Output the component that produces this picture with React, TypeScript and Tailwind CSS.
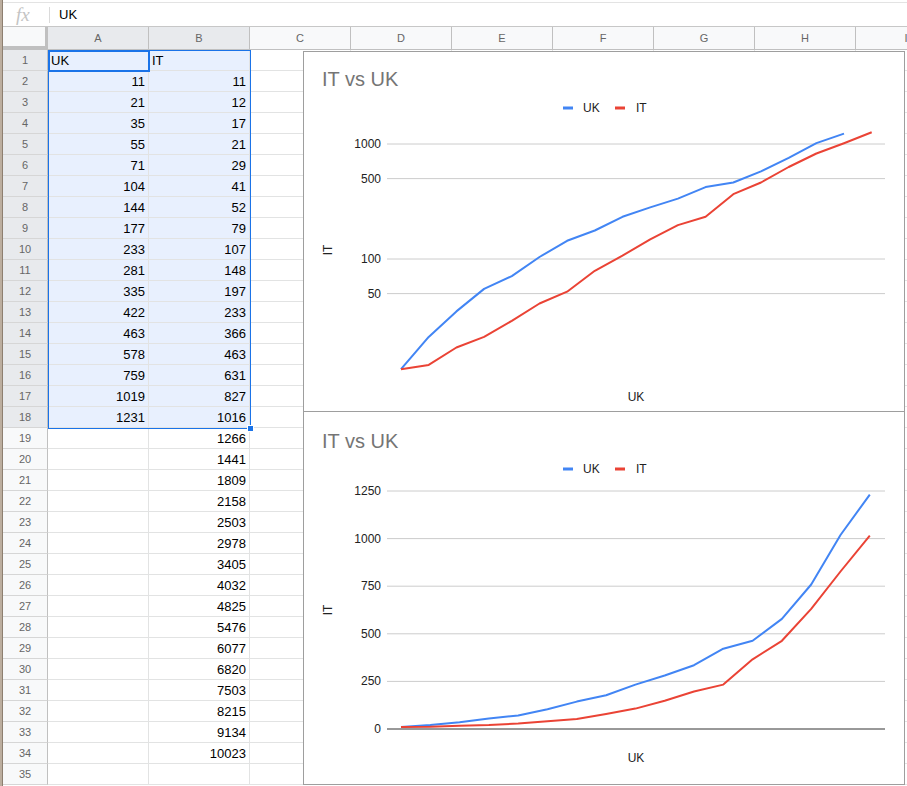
const UK = [11, 21, 35, 55, 71, 104, 144, 177, 233, 281, 335, 422, 463, 578, 759, 1019, 1231];
const IT = [
  11, 12, 17, 21, 29, 41, 52, 79, 107, 148, 197, 233, 366, 463, 631, 827, 1016, 1266, 1441, 1809, 2158, 2503,
  2978, 3405, 4032, 4825, 5476, 6077, 6820, 7503, 8215, 9134, 10023,
];
const COLS = ["A", "B", "C", "D", "E", "F", "G", "H", "I"];
const ROWS = Array.from({ length: 35 }, (_, i) => i + 1);

const BLUE = "#4285f4";
const RED = "#ea4335";

function pts(values: number[], x0: number, dx: number, y: (v: number) => number) {
  return values.map((v, i) => `${(x0 + i * dx).toFixed(1)},${y(v).toFixed(1)}`).join(" ");
}

function Legend({ y }: { y: number }) {
  return (
    <g fontSize="12" fill="#222">
      <rect x={260} y={y - 1.5} width={10} height={3} fill={BLUE} />
      <text x={280} y={y} dominantBaseline="central">UK</text>
      <rect x={312} y={y - 1.5} width={10} height={3} fill={RED} />
      <text x={333} y={y} dominantBaseline="central">IT</text>
    </g>
  );
}

function LogChart() {
  const y = (v: number) => 93 + 115 * (3 - Math.log10(v));
  const ticks = [1000, 500, 100, 50];
  return (
    <svg width={602} height={361} className="absolute -left-px -top-px">
      <text x={19} y={35} fontSize="20" fill="#757575">IT vs UK</text>
      <Legend y={57} />
      {ticks.map((t) => (
        <g key={t}>
          <line x1={84} x2={582} y1={y(t)} y2={y(t)} stroke="#cccccc" strokeWidth={1} />
          <text x={78} y={y(t)} fontSize="12" fill="#222" textAnchor="end" dominantBaseline="central">
            {t}
          </text>
        </g>
      ))}
      <text
        x={25}
        y={199}
        fontSize="12"
        fill="#222"
        textAnchor="middle"
        dominantBaseline="central"
        transform="rotate(-90 25 199)"
      >
        IT
      </text>
      <text x={333} y={346} fontSize="12" fill="#222" textAnchor="middle" dominantBaseline="central">
        UK
      </text>
      <polyline points={pts(UK, 98, 27.69, y)} fill="none" stroke={BLUE} strokeWidth={2} strokeLinejoin="round" />
      <polyline
        points={pts(IT.slice(0, 18), 98, 27.69, y)}
        fill="none"
        stroke={RED}
        strokeWidth={2}
        strokeLinejoin="round"
      />
    </svg>
  );
}

function LinearChart() {
  const y = (v: number) => 318 - v * 0.1904;
  const ticks = [1250, 1000, 750, 500, 250, 0];
  return (
    <svg width={602} height={374} className="absolute -left-px -top-px">
      <text x={19} y={37} fontSize="20" fill="#757575">IT vs UK</text>
      <Legend y={58} />
      {ticks.map((t) => (
        <g key={t}>
          <line
            x1={84}
            x2={582}
            y1={y(t)}
            y2={y(t)}
            stroke={t === 0 ? "#333333" : "#cccccc"}
            strokeWidth={1}
          />
          <text x={78} y={y(t)} fontSize="12" fill="#222" textAnchor="end" dominantBaseline="central">
            {t}
          </text>
        </g>
      ))}
      <text
        x={25}
        y={199}
        fontSize="12"
        fill="#222"
        textAnchor="middle"
        dominantBaseline="central"
        transform="rotate(-90 25 199)"
      >
        IT
      </text>
      <text x={333} y={347} fontSize="12" fill="#222" textAnchor="middle" dominantBaseline="central">
        UK
      </text>
      <polyline points={pts(UK, 98, 29.3, y)} fill="none" stroke={BLUE} strokeWidth={2} strokeLinejoin="round" />
      <polyline
        points={pts(IT.slice(0, 17), 98, 29.3, y)}
        fill="none"
        stroke={RED}
        strokeWidth={2}
        strokeLinejoin="round"
      />
    </svg>
  );
}

function cellValue(row: number, col: string) {
  if (row === 1) return col === "A" ? "UK" : col === "B" ? "IT" : "";
  if (col === "A" && row <= 18) return String(UK[row - 2]);
  if (col === "B" && row <= 34) return String(IT[row - 2]);
  return "";
}

export default function App() {
  return (
    <div className="relative flex w-[907px] h-[786px] overflow-hidden bg-white font-['Liberation_Sans',Arial,sans-serif] text-black">
      {/* window edge behind the sheet */}
      <div className="w-[3px] shrink-0 bg-[#bcae9f] border-r border-[#8d7f70]" />

      <div className="flex-1 flex flex-col">
        {/* Formula bar */}
        <div className="h-[27px] pt-[2px] shrink-0">
          <div className="h-[25px] border-t border-b border-t-[#e3e3e3] border-b-[#c7c7c7] flex items-center">
            <span className="w-[46px] pl-[13px] text-[19px] italic text-[#c4c4c4] font-['Liberation_Serif',serif] leading-none">
              fx
            </span>
            <span className="h-[16px] border-l border-[#dadada]" />
            <span className="pl-[9px] text-[13px]">UK</span>
          </div>
        </div>

        {/* Column headers */}
        <div className="flex h-[23px] shrink-0 border-b border-[#c0c0c0]">
          <div className="w-[45px] shrink-0 bg-[#f8f9fa] border-r-[3px] border-b-[3px] border-[#c0c0c0]" />
          {COLS.map((c) => (
            <div
              key={c}
              className={`w-[101px] shrink-0 border-r border-[#c0c0c0] flex items-center justify-center text-[11px] text-[#666] ${
                c === "A" || c === "B" ? "bg-[#e8eaed]" : "bg-[#f8f9fa]"
              }`}
            >
              {c}
            </div>
          ))}
        </div>

        {/* Rows */}
        {ROWS.map((r) => (
          <div key={r} className="flex h-[21px] shrink-0">
            <div
              className={`w-[45px] shrink-0 border-r border-b border-r-[#c0c0c0] border-b-[#d6d6d6] flex items-center justify-center pt-px text-[11px] text-[#666] ${
                r <= 18 ? "bg-[#e8eaed]" : "bg-[#f8f9fa]"
              }`}
            >
              {r}
            </div>
            {COLS.map((c) => {
              const v = cellValue(r, c);
              const sel = r <= 18 && (c === "A" || c === "B");
              return (
                <div
                  key={c}
                  className={`w-[101px] shrink-0 border-r border-b border-[#e2e3e3] text-[13px] leading-[19px] pt-px px-[3px] ${
                    r === 1 ? "text-left" : "text-right"
                  } ${sel ? "bg-[#e8f0fe]" : "bg-white"}`}
                >
                  {v}
                </div>
              );
            })}
          </div>
        ))}
      </div>

      {/* Selection */}
      <div className="absolute left-[48px] top-[50px] w-[203px] h-[379px] border border-[#1a73e8] pointer-events-none" />
      <div className="absolute left-[48px] top-[50px] w-[102px] h-[22px] border-2 border-[#1a73e8] pointer-events-none" />
      <div className="absolute left-[247px] top-[425px] w-[7px] h-[7px] bg-[#1a73e8] border border-white" />

      {/* Charts */}
      <div className="absolute left-[303px] top-[51px] w-[602px] h-[361px] border border-[#9e9e9e] bg-white">
        <LogChart />
      </div>
      <div className="absolute left-[303px] top-[411px] w-[602px] h-[374px] border border-[#9e9e9e] bg-white">
        <LinearChart />
      </div>
    </div>
  );
}
